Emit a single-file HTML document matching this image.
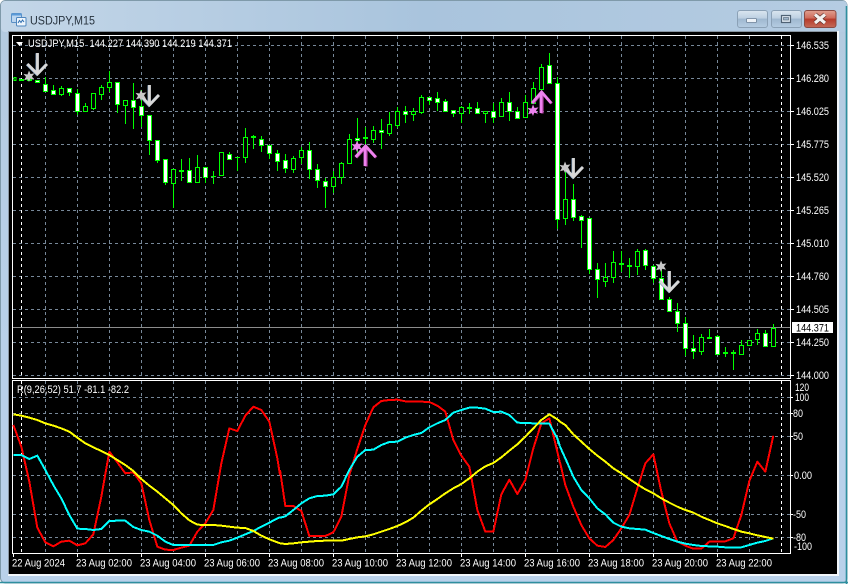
<!DOCTYPE html>
<html><head><meta charset="utf-8"><title>USDJPY,M15</title>
<style>
html,body{margin:0;padding:0;background:#fff;overflow:hidden}
svg{display:block;font-family:"Liberation Sans",sans-serif}
text{font-size:11px;fill:#fff;white-space:pre}
</style></head><body>
<svg width="848" height="584" viewBox="0 0 848 584" xmlns="http://www.w3.org/2000/svg">
<defs>
<linearGradient id="fr" x1="0" y1="0" x2="0" y2="1"><stop offset="0" stop-color="#a9c2d9"/><stop offset=".06" stop-color="#b4cbe0"/><stop offset=".6" stop-color="#b9d1ea"/><stop offset="1" stop-color="#b9d1ea"/></linearGradient>
<linearGradient id="tb" x1="0" y1="0" x2="1" y2="0"><stop offset="0" stop-color="#c3d6e8"/><stop offset=".5" stop-color="#a9c4dd"/><stop offset="1" stop-color="#b5cce2"/></linearGradient>
<linearGradient id="bt" x1="0" y1="0" x2="0" y2="1"><stop offset="0" stop-color="#dbe6f0"/><stop offset=".45" stop-color="#bdd0e2"/><stop offset=".5" stop-color="#9fb8d0"/><stop offset="1" stop-color="#b6cde2"/></linearGradient>
<linearGradient id="cl" x1="0" y1="0" x2="0" y2="1"><stop offset="0" stop-color="#e0a090"/><stop offset=".45" stop-color="#cf6a5a"/><stop offset=".5" stop-color="#b63a2a"/><stop offset="1" stop-color="#c46a58"/></linearGradient>
</defs>
<!-- window frame -->
<rect x=".5" y=".5" width="846.5" height="582.5" rx="5" fill="url(#fr)" stroke="#7f9aaa"/>
<rect x="1" y="1" width="846" height="31" rx="4" fill="url(#tb)"/>
<path d="M0 582.5H848M846.5 6V584" stroke="#2f8f9f" stroke-width="1.6" fill="none"/>
<rect x="8" y="31" width="831" height="545" fill="#f2f6fa"/>
<rect x="8" y="31" width="829" height="1" fill="#8a97a3"/>
<rect x="8" y="31" width="1" height="543" fill="#8a97a3"/>
<rect x="9" y="32" width="828" height="542" fill="#000"/>
<!-- title -->
<g fill="none">
<rect x="11.500" y="13.500" width="10" height="9" rx="1" fill="#bcd6f0" stroke="#5a8fc4"/>
<rect x="11.500" y="13.500" width="10" height="2" fill="#5a9ad8"/>
<rect x="16.500" y="17.500" width="9.500" height="8.500" rx="1" fill="#eef5fc" stroke="#4f86be"/>
<path d="M18 23l1.500-2.500 1.500 2 1.500-2.500 1.500 2" stroke="#2f6fb0"/>
</g>
<text x="30" y="24.300" style="font-size:12px;fill:#26323e" textLength="65" lengthAdjust="spacingAndGlyphs">USDJPY,M15</text>
<!-- buttons -->
<rect x="737.500" y="10.500" width="30" height="17" rx="2.500" fill="url(#bt)" stroke="#8ba1b6"/>
<rect x="746.500" y="18.500" width="10" height="4" rx="1" fill="#eef3f8" stroke="#6a7f95" stroke-width=".8"/>
<rect x="771.500" y="10.500" width="30" height="17" rx="2.500" fill="url(#bt)" stroke="#8ba1b6"/>
<rect x="781.500" y="15.500" width="9" height="7" fill="#dfe8f0" stroke="#4f6274" stroke-width="1.200"/>
<rect x="783.500" y="17.500" width="5" height="2.500" fill="#9fb5c9" stroke="#4f6274" stroke-width=".6"/>
<rect x="804.500" y="10.500" width="31.500" height="17" rx="2.500" fill="url(#cl)" stroke="#8b4a42"/>
<path d="M815 14.500l10 8.500M825 14.500l-10 8.500" stroke="#5f302a" stroke-width="4.600"/>
<path d="M815 14.500l10 8.500M825 14.500l-10 8.500" stroke="#f4f2f0" stroke-width="3.200"/>

<!-- grid -->
<g fill="none" stroke="#778899" stroke-dasharray="3 3" shape-rendering="crispEdges">
<path d="M13 45.500H790M13 78.500H790M13 111.500H790M13 144.500H790M13 177.500H790M13 210.500H790M13 243.500H790M13 276.500H790M13 309.500H790M13 342.500H790M13 375.500H790"/>
<path d="M13 397.500H790M13 413.500H790M13 436.500H790M13 475.500H790M13 514.500H790M13 537.500H790"/>
<path d="M45.500 36V378M77.500 36V378M109.500 36V378M141.500 36V378M173.500 36V378M205.500 36V378M237.500 36V378M269.500 36V378M301.500 36V378M333.500 36V378M365.500 36V378M397.500 36V378M429.500 36V378M461.500 36V378M493.500 36V378M525.500 36V378M557.500 36V378M589.500 36V378M621.500 36V378M653.500 36V378M685.500 36V378M717.500 36V378M749.500 36V378"/>
<path d="M45.500 381V553M77.500 381V553M109.500 381V553M141.500 381V553M173.500 381V553M205.500 381V553M237.500 381V553M269.500 381V553M301.500 381V553M333.500 381V553M365.500 381V553M397.500 381V553M429.500 381V553M461.500 381V553M493.500 381V553M525.500 381V553M557.500 381V553M589.500 381V553M621.500 381V553M653.500 381V553M685.500 381V553M717.500 381V553M749.500 381V553"/>
</g>
<path d="M21.500 36V378M21.500 381V553M781.500 36V378M781.500 381V553" stroke="#fff" fill="none" stroke-dasharray="3 3" shape-rendering="crispEdges"/>
<!-- price line -->
<path d="M13 327.500H791" stroke="#8c8c8c" shape-rendering="crispEdges"/>
<!-- frames and ticks -->
<g fill="none" stroke="#fff" shape-rendering="crispEdges">
<path d="M12.500 35.500H790.500V378.500H12.500Z"/>
<path d="M12.500 380.500H790.500V553.500H12.500Z"/>
<path d="M790 45.500h4M790 78.500h4M790 111.500h4M790 144.500h4M790 177.500h4M790 210.500h4M790 243.500h4M790 276.500h4M790 309.500h4M790 342.500h4M790 375.500h4M790 397.500h3M790 413.500h3M790 436.500h3M790 475.500h3M790 514.500h3M790 537.500h3"/>
<path d="M13.500 553v4M77.500 553v4M141.500 553v4M205.500 553v4M269.500 553v4M333.500 553v4M397.500 553v4M461.500 553v4M525.500 553v4M589.500 553v4M653.500 553v4M717.500 553v4"/>
</g>
<!-- wicks -->
<path fill="none" stroke="#00ff00" shape-rendering="crispEdges" d="M45.500 77V91M53.500 85V94M61.500 86V96M69.500 88V96M77.500 89V115M85.500 103V111M93.500 93V110M101.500 85V100M109.500 71V92M117.500 82V113M125.500 100V124M133.500 83V129M141.500 90V127M149.500 115V155M157.500 140V163M165.500 159V185M173.500 169V208M181.500 159V181M189.500 158V182M197.500 155V182M205.500 167V183M213.500 171V184M221.500 152V175M229.500 152V160M237.500 157V171M245.500 128V163M253.500 135V149M261.500 136V152M269.500 145V159M277.500 150V171M285.500 154V173M293.500 156V173M301.500 147V164M309.500 142V179M317.500 164V188M325.500 178V208M333.500 171V193M341.500 162V184M349.500 134V163M357.500 118V153M365.500 127V146M373.500 126V143M381.500 119V149M389.500 112V136M397.500 107V128M405.500 106V123M413.500 108V121M421.500 95V114M429.500 97V105M437.500 92V111M445.500 99V111M453.500 110V117M461.500 106V123M469.500 103V114M477.500 102V113M485.500 111V123M493.500 103V123M501.500 98V117M509.500 92V121M517.500 107V119M525.500 95V117M533.500 82V103M541.500 64V90M549.500 53V84M557.500 77V229M565.500 170V225M573.500 184V221M581.500 215V248M589.500 218V274M597.500 263V298M605.500 263V287M613.500 251V283M621.500 251V272M629.500 258V278M637.500 249V275M645.500 249V270M653.500 265V283M661.500 270V299M669.500 297V311M677.500 303V332M685.500 317V356M693.500 335V359M701.500 334V355M709.500 329V339M717.500 335V355M725.500 347V357M733.500 350V370M741.500 340V354M749.500 340V345M757.500 329V345M765.500 330V346M773.500 324V347"/>
<!-- hollow bodies -->
<path fill="#000" stroke="#00ff00" shape-rendering="crispEdges" d="M14 77.500h2V80.500h-2zM59.500 88.500h4V94.500h-4zM83.500 106.500h4V111.500h-4zM91.500 93.500h4V108.500h-4zM99.500 87.500h4V94.500h-4zM107.500 82.500h4V87.500h-4zM123.500 100.500h4V105.500h-4zM171.500 169.500h4V183.500h-4zM195.500 167.500h4V182.500h-4zM219.500 152.500h4V175.500h-4zM243.500 137.500h4V157.500h-4zM291.500 158.500h4V169.500h-4zM299.500 150.500h4V157.500h-4zM331.500 177.500h4V186.500h-4zM339.500 163.500h4V177.500h-4zM347.500 139.500h4V163.500h-4zM371.500 130.500h4V139.500h-4zM387.500 124.500h4V133.500h-4zM395.500 111.500h4V125.500h-4zM411.500 111.500h4V114.500h-4zM419.500 97.500h4V112.500h-4zM459.500 107.500h4V113.500h-4zM483.500 111.500h4V113.500h-4zM499.500 102.500h4V116.500h-4zM523.500 102.500h4V117.500h-4zM531.500 88.500h4V103.500h-4zM539.500 67.500h4V89.500h-4zM563.500 199.500h4V218.500h-4zM603.500 277.500h4V281.500h-4zM611.500 262.500h4V277.500h-4zM635.500 251.500h4V266.500h-4zM699.500 337.500h4V351.500h-4zM739.500 345.500h4V354.500h-4zM747.500 340.500h4V345.500h-4zM755.500 333.500h4V339.500h-4zM771.500 328.500h4V346.500h-4z"/>
<!-- filled bodies -->
<path fill="#fff" stroke="#00ff00" shape-rendering="crispEdges" d="M35.500 80.500h4V82.500h-4zM43.500 84.500h4V91.500h-4zM51.500 90.500h4V94.500h-4zM67.500 88.500h4V92.500h-4zM75.500 93.500h4V111.500h-4zM115.500 82.500h4V104.500h-4zM131.500 100.500h4V107.500h-4zM139.500 106.500h4V115.500h-4zM147.500 115.500h4V140.500h-4zM155.500 140.500h4V160.500h-4zM163.500 159.500h4V182.500h-4zM187.500 170.500h4V182.500h-4zM203.500 167.500h4V177.500h-4zM227.500 154.500h4V159.500h-4zM259.500 139.500h4V145.500h-4zM267.500 145.500h4V153.500h-4zM275.500 153.500h4V161.500h-4zM283.500 160.500h4V168.500h-4zM307.500 150.500h4V169.500h-4zM315.500 169.500h4V180.500h-4zM323.500 181.500h4V186.500h-4zM355.500 138.500h4V140.500h-4zM379.500 130.500h4V132.500h-4zM403.500 111.500h4V114.500h-4zM427.500 97.500h4V100.500h-4zM435.500 98.500h4V102.500h-4zM443.500 101.500h4V111.500h-4zM451.500 110.500h4V113.500h-4zM475.500 108.500h4V113.500h-4zM491.500 111.500h4V117.500h-4zM507.500 102.500h4V111.500h-4zM515.500 111.500h4V118.500h-4zM547.500 65.500h4V83.500h-4zM555.500 83.500h4V219.500h-4zM571.500 199.500h4V217.500h-4zM579.500 216.500h4V220.500h-4zM587.500 218.500h4V269.500h-4zM595.500 269.500h4V279.500h-4zM643.500 250.500h4V265.500h-4zM651.500 266.500h4V278.500h-4zM659.500 278.500h4V299.500h-4zM667.500 299.500h4V311.500h-4zM675.500 311.500h4V323.500h-4zM683.500 323.500h4V348.500h-4zM691.500 348.500h4V351.500h-4zM715.500 336.500h4V354.500h-4zM763.500 333.500h4V346.500h-4z"/>
<!-- doji -->
<path fill="#00ff00" shape-rendering="crispEdges" d="M19 79h5v2h-5zM27 79h5v2h-5zM179 170h5v2h-5zM211 176h5v1h-5zM235 157h5v1h-5zM251 136h5v2h-5zM363 137h5v2h-5zM467 107h5v2h-5zM619 263h5v2h-5zM627 265h5v2h-5zM707 337h5v2h-5zM723 352h5v2h-5zM731 352h5v2h-5z"/>
<!-- down arrows -->
<g fill="none" stroke-linejoin="miter">
<g stroke="#7f9fc0" stroke-width="2.800" transform="translate(-.6,.3)">
<path d="M37.500 53V73M27.500 64L37.500 74 47 64M149.500 85V105M140.500 95L149.500 105 159 95M573.500 158V177M564 167L573.500 177 583 167M669.500 271V291M660 281L669.500 291 679 281"/>
</g>
<g stroke="#d8d8d8" stroke-width="2.800">
<path d="M37.500 53V73M27.500 64L37.500 74 47 64M149.500 85V105M140.500 95L149.500 105 159 95M573.500 158V177M564 167L573.500 177 583 167M669.500 271V291M660 281L669.500 291 679 281"/>
</g>
<g stroke="#b040a0" stroke-width="2.800" transform="translate(.7,.5)">
<path d="M365.500 146V166M355.500 157L365.500 146 375.500 157M541.500 92V113M532 103L541.500 92 551 103"/>
</g>
<g stroke="#ee82ee" stroke-width="2.800">
<path d="M365 146V166M355.500 157L365.500 146 375.500 157M541 92V113M532 103L541.500 92 551 103"/>
</g>
</g>
<!-- stars -->
<g fill="#c8c8c8">
<path d="M29 70.500l1.500 3.500 4-.6-2.500 3 2 3.400-3.800-1L29 82l-1.200-2.700-3.800 1 2-3.400-2.500-3 4 .6z"/>
<path transform="translate(112,19)" d="M29 70.500l1.500 3.500 4-.6-2.500 3 2 3.400-3.800-1L29 82l-1.200-2.700-3.800 1 2-3.400-2.500-3 4 .6z"/>
<path transform="translate(536,91)" d="M29 70.500l1.500 3.500 4-.6-2.500 3 2 3.400-3.800-1L29 82l-1.200-2.700-3.800 1 2-3.400-2.500-3 4 .6z"/>
<path transform="translate(632,190)" d="M29 70.500l1.500 3.500 4-.6-2.500 3 2 3.400-3.800-1L29 82l-1.200-2.700-3.800 1 2-3.400-2.500-3 4 .6z"/>
<path fill="#ee82ee" transform="translate(328,70)" d="M29 70.500l1.500 3.500 4-.6-2.500 3 2 3.400-3.800-1L29 82l-1.200-2.700-3.800 1 2-3.400-2.500-3 4 .6z"/>
<path fill="#ee82ee" transform="translate(504,34)" d="M29 70.500l1.500 3.500 4-.6-2.500 3 2 3.400-3.800-1L29 82l-1.200-2.700-3.800 1 2-3.400-2.500-3 4 .6z"/>
</g>
<!-- indicator lines -->
<g fill="none" stroke-width="6" stroke-linejoin="round" shape-rendering="crispEdges">
<g stroke="#ff0000">
<polyline transform="translate(0,375) scale(.33333)" points="40,150 64,215 88,320 112,458 136,502 160,514 184,500 208,497 232,511 256,505 280,478 304,365 328,230 352,262 376,295 400,292 424,325 448,435 472,515 496,524 520,525 544,518 568,512 592,470 616,445 640,405 664,265 688,160 712,168 736,122 760,95 784,105 808,140 832,250 840,300"/>
<polyline transform="translate(280,375) scale(.33333)" points="0,285 16,393 40,393 64,408 88,483 112,483 136,483 160,472 184,425 208,300 232,222 256,150 280,97 304,78 328,75 352,74 376,79 400,80 424,80 448,81 472,92 496,110 520,195 544,242 568,275 592,405 616,470 640,470 664,358 688,314 712,357 736,315 760,220 784,145 808,130 832,230 840,265"/>
<polyline transform="translate(560,375) scale(.33333)" points="0,262 16,330 40,395 64,450 88,490 112,512 136,516 160,495 184,460 208,420 232,340 256,265 280,238 304,350 328,445 352,500 376,512 400,521 424,521 448,500 472,500 496,499 520,490 544,420 568,318 592,260 616,290 640,182"/>
</g>
<g stroke="#00ffff">
<polyline transform="translate(0,375) scale(.33333)" points="40,240 64,240 88,252 112,242 136,285 160,330 184,370 208,420 232,461 256,462 280,465 304,462 328,438 352,437 376,437 400,456 424,465 448,470 472,482 496,500 520,510 544,510 568,510 592,510 616,510 640,510 664,502 688,497 712,488 736,478 760,468 784,455 808,443 840,426"/>
<polyline transform="translate(280,375) scale(.33333)" points="0,428 16,424 40,405 64,385 88,370 112,363 136,362 160,358 184,335 208,285 232,245 256,225 280,224 304,210 328,201 352,200 376,188 400,180 424,174 448,157 472,145 496,135 520,113 544,105 568,98 592,98 616,101 640,111 664,110 688,120 712,143 736,144 760,145 784,146 808,146 832,190 840,215"/>
<polyline transform="translate(560,375) scale(.33333)" points="0,215 16,250 40,305 64,345 88,370 112,400 136,418 160,443 184,455 208,460 232,462 256,464 280,474 304,483 328,492 352,500 376,506 400,510 424,513 448,514 472,515 496,517 520,518 544,517 568,510 592,503 616,498 640,490"/>
</g>
<g stroke="#ffff00">
<polyline transform="translate(0,375) scale(.33333)" points="40,118 64,122 88,128 112,135 136,145 160,152 184,160 208,170 232,188 256,205 280,217 304,228 328,240 352,255 376,270 400,288 424,312 448,332 472,350 496,370 520,390 544,415 568,436 592,449 616,450 640,450 664,452 688,455 712,458 736,459 760,468 784,482 808,493 840,505"/>
<polyline transform="translate(280,375) scale(.33333)" points="0,505 16,507 40,505 64,502 88,500 112,498 136,497 160,497 184,497 208,492 232,487 256,484 280,478 304,470 328,462 352,453 376,442 400,428 424,407 448,388 472,372 496,355 520,340 544,327 568,310 592,290 616,274 640,264 664,247 688,227 712,208 736,185 760,160 784,135 808,118 832,133 840,140"/>
<polyline transform="translate(560,375) scale(.33333)" points="0,140 16,150 40,178 64,200 88,222 112,242 136,260 160,280 184,295 208,312 232,328 256,343 280,355 304,370 328,383 352,395 376,405 400,413 424,425 448,435 472,445 496,453 520,462 544,470 568,475 592,481 616,486 640,491"/>
</g>
</g>
<!-- header text -->
<path d="M16 42h7l-3.500 4z" fill="#fff"/>
<text x="28" y="47" textLength="204" lengthAdjust="spacingAndGlyphs">USDJPY,M15  144.227 144.390 144.219 144.371</text>
<text x="17" y="393" textLength="112" lengthAdjust="spacingAndGlyphs">R(9,26,52) 51.7 -81.1 -82.2</text>
<!-- price labels -->
<g>
<text x="796" y="49" textLength="33" lengthAdjust="spacingAndGlyphs">146.535</text>
<text x="796" y="82" textLength="33" lengthAdjust="spacingAndGlyphs">146.280</text>
<text x="796" y="115" textLength="33" lengthAdjust="spacingAndGlyphs">146.025</text>
<text x="796" y="148" textLength="33" lengthAdjust="spacingAndGlyphs">145.775</text>
<text x="796" y="181" textLength="33" lengthAdjust="spacingAndGlyphs">145.520</text>
<text x="796" y="214" textLength="33" lengthAdjust="spacingAndGlyphs">145.265</text>
<text x="796" y="247" textLength="33" lengthAdjust="spacingAndGlyphs">145.010</text>
<text x="796" y="280" textLength="33" lengthAdjust="spacingAndGlyphs">144.760</text>
<text x="796" y="313" textLength="33" lengthAdjust="spacingAndGlyphs">144.505</text>
<text x="796" y="346" textLength="33" lengthAdjust="spacingAndGlyphs">144.250</text>
<text x="796" y="379" textLength="33" lengthAdjust="spacingAndGlyphs">144.000</text>
<rect x="792" y="322" width="41" height="11" fill="#fff"/>
<text x="796" y="331.500" style="fill:#000" textLength="33" lengthAdjust="spacingAndGlyphs">144.371</text>
<text x="795" y="391" textLength="14" lengthAdjust="spacingAndGlyphs">120</text>
<text x="795" y="401" textLength="14" lengthAdjust="spacingAndGlyphs">100</text>
<text x="793" y="417" textLength="10" lengthAdjust="spacingAndGlyphs">80</text>
<text x="793" y="440" textLength="10" lengthAdjust="spacingAndGlyphs">50</text>
<text x="794" y="479" textLength="18" lengthAdjust="spacingAndGlyphs">0.00</text>
<text x="793" y="518" textLength="13" lengthAdjust="spacingAndGlyphs">-50</text>
<text x="793" y="541" textLength="13" lengthAdjust="spacingAndGlyphs">-80</text>
<text x="794" y="550" textLength="18" lengthAdjust="spacingAndGlyphs">-100</text>
</g>
<!-- time labels -->
<g>
<text x="12" y="566.500" textLength="53" lengthAdjust="spacingAndGlyphs">22 Aug 2024</text>
<text x="76" y="566.500" textLength="56" lengthAdjust="spacingAndGlyphs">23 Aug 02:00</text>
<text x="140" y="566.500" textLength="56" lengthAdjust="spacingAndGlyphs">23 Aug 04:00</text>
<text x="204" y="566.500" textLength="56" lengthAdjust="spacingAndGlyphs">23 Aug 06:00</text>
<text x="268" y="566.500" textLength="56" lengthAdjust="spacingAndGlyphs">23 Aug 08:00</text>
<text x="332" y="566.500" textLength="56" lengthAdjust="spacingAndGlyphs">23 Aug 10:00</text>
<text x="396" y="566.500" textLength="56" lengthAdjust="spacingAndGlyphs">23 Aug 12:00</text>
<text x="460" y="566.500" textLength="56" lengthAdjust="spacingAndGlyphs">23 Aug 14:00</text>
<text x="524" y="566.500" textLength="56" lengthAdjust="spacingAndGlyphs">23 Aug 16:00</text>
<text x="588" y="566.500" textLength="56" lengthAdjust="spacingAndGlyphs">23 Aug 18:00</text>
<text x="652" y="566.500" textLength="56" lengthAdjust="spacingAndGlyphs">23 Aug 20:00</text>
<text x="716" y="566.500" textLength="56" lengthAdjust="spacingAndGlyphs">23 Aug 22:00</text>
</g>
</svg>
</body></html>
